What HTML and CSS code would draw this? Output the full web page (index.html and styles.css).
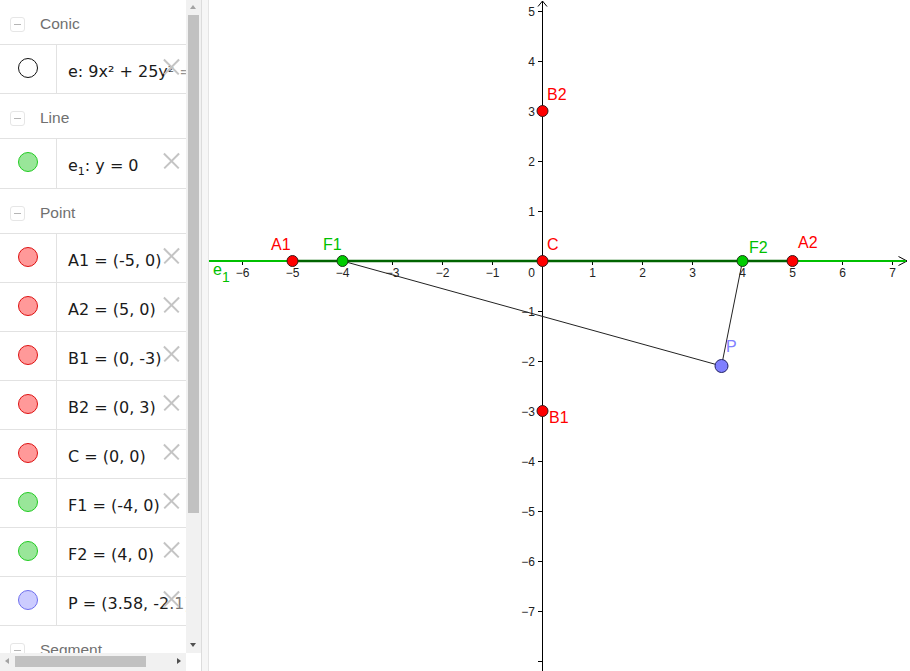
FILE: index.html
```html
<!DOCTYPE html>
<html>
<head>
<meta charset="utf-8">
<link rel="stylesheet" href="styles.css">
</head>
<body>
<div class="app">
  <div class="algebra">
    <div class="algebra-top">
      <div class="list">
        <div class="group"><span class="collapse"></span><span class="group-name">Conic</span></div>
        <div class="item"><div class="marble-col"><span class="marble m-conic"></span></div><div class="formula">e: 9x² + 25y² = 225</div><span class="del"></span></div>
        <div class="group"><span class="collapse"></span><span class="group-name">Line</span></div>
        <div class="item item-tall"><div class="marble-col"><span class="marble m-green"></span></div><div class="formula">e<sub>1</sub>: y = 0</div><span class="del"></span></div>
        <div class="group"><span class="collapse"></span><span class="group-name">Point</span></div>
        <div class="item"><div class="marble-col"><span class="marble m-red"></span></div><div class="formula">A1 = (-5, 0)</div><span class="del"></span></div>
        <div class="item"><div class="marble-col"><span class="marble m-red"></span></div><div class="formula">A2 = (5, 0)</div><span class="del"></span></div>
        <div class="item"><div class="marble-col"><span class="marble m-red"></span></div><div class="formula">B1 = (0, -3)</div><span class="del"></span></div>
        <div class="item"><div class="marble-col"><span class="marble m-red"></span></div><div class="formula">B2 = (0, 3)</div><span class="del"></span></div>
        <div class="item"><div class="marble-col"><span class="marble m-red"></span></div><div class="formula">C = (0, 0)</div><span class="del"></span></div>
        <div class="item"><div class="marble-col"><span class="marble m-green"></span></div><div class="formula">F1 = (-4, 0)</div><span class="del"></span></div>
        <div class="item"><div class="marble-col"><span class="marble m-green"></span></div><div class="formula">F2 = (4, 0)</div><span class="del"></span></div>
        <div class="item"><div class="marble-col"><span class="marble m-blue"></span></div><div class="formula">P = (3.58, -2.1)</div><span class="del"></span></div>
        <div class="group"><span class="collapse"></span><span class="group-name">Segment</span></div>
      </div>
      <div class="vscroll">
        <span class="arrow arrow-up"></span>
        <div class="vthumb"></div>
        <span class="arrow arrow-down"></span>
      </div>
    </div>
    <div class="algebra-bottom">
      <div class="hscroll">
        <span class="arrow arrow-left"></span>
        <div class="hthumb"></div>
        <span class="arrow arrow-right"></span>
      </div>
      <div class="corner"></div>
    </div>
  </div>
  <div class="splitter"></div>
  <div class="graphics">
    <svg class="canvas" width="701" height="671" viewBox="0 0 701 671">
      <g stroke="#000" stroke-width="1" fill="none">
        <line x1="0" y1="261" x2="698" y2="261"/>
        <polyline points="689.5,256.5 698,261 689.5,265.5"/>
        <line x1="333.5" y1="1" x2="333.5" y2="671"/>
        <polyline points="329,6.5 333.5,1 338,6.5"/>
      </g>
      <g stroke="#000" stroke-width="1">
        <line x1="33.5" y1="261" x2="33.5" y2="265"/>
        <line x1="83.5" y1="261" x2="83.5" y2="265"/>
        <line x1="133.5" y1="261" x2="133.5" y2="265"/>
        <line x1="183.5" y1="261" x2="183.5" y2="265"/>
        <line x1="233.5" y1="261" x2="233.5" y2="265"/>
        <line x1="283.5" y1="261" x2="283.5" y2="265"/>
        <line x1="383.5" y1="261" x2="383.5" y2="265"/>
        <line x1="433.5" y1="261" x2="433.5" y2="265"/>
        <line x1="483.5" y1="261" x2="483.5" y2="265"/>
        <line x1="533.5" y1="261" x2="533.5" y2="265"/>
        <line x1="583.5" y1="261" x2="583.5" y2="265"/>
        <line x1="633.5" y1="261" x2="633.5" y2="265"/>
        <line x1="683.5" y1="261" x2="683.5" y2="265"/>
        <line x1="329" y1="11.5" x2="333.5" y2="11.5"/>
        <line x1="329" y1="61.5" x2="333.5" y2="61.5"/>
        <line x1="329" y1="111.5" x2="333.5" y2="111.5"/>
        <line x1="329" y1="161.5" x2="333.5" y2="161.5"/>
        <line x1="329" y1="211.5" x2="333.5" y2="211.5"/>
        <line x1="329" y1="311.5" x2="333.5" y2="311.5"/>
        <line x1="329" y1="361.5" x2="333.5" y2="361.5"/>
        <line x1="329" y1="411.5" x2="333.5" y2="411.5"/>
        <line x1="329" y1="461.5" x2="333.5" y2="461.5"/>
        <line x1="329" y1="511.5" x2="333.5" y2="511.5"/>
        <line x1="329" y1="561.5" x2="333.5" y2="561.5"/>
        <line x1="329" y1="611.5" x2="333.5" y2="611.5"/>
        <line x1="329" y1="661.5" x2="333.5" y2="661.5"/>
      </g>
      <g class="axis-num" text-anchor="middle">
        <text x="33.5" y="277">−6</text>
        <text x="83.5" y="277">−5</text>
        <text x="133.5" y="277">−4</text>
        <text x="183.5" y="277">−3</text>
        <text x="233.5" y="277">−2</text>
        <text x="283.5" y="277">−1</text>
        <text x="383.5" y="277">1</text>
        <text x="433.5" y="277">2</text>
        <text x="483.5" y="277">3</text>
        <text x="533.5" y="277">4</text>
        <text x="583.5" y="277">5</text>
        <text x="633.5" y="277">6</text>
        <text x="683.5" y="277">7</text>
      </g>
      <g class="axis-num" text-anchor="end">
        <text x="326" y="277">0</text>
        <text x="326" y="16">5</text>
        <text x="326" y="66">4</text>
        <text x="326" y="116">3</text>
        <text x="326" y="166">2</text>
        <text x="326" y="216">1</text>
        <text x="326" y="316">−1</text>
        <text x="326" y="366">−2</text>
        <text x="326" y="416">−3</text>
        <text x="326" y="466">−4</text>
        <text x="326" y="516">−5</text>
        <text x="326" y="566">−6</text>
        <text x="326" y="616">−7</text>
      </g>
      <line x1="0" y1="261" x2="697" y2="261" stroke="#00c000" stroke-width="2"/>
      <line x1="83.5" y1="261" x2="583.5" y2="261" stroke="#006400" stroke-width="2.5"/>
      <g stroke="#222" stroke-width="1">
        <line x1="133.5" y1="261" x2="512.5" y2="366"/>
        <line x1="512.5" y1="366" x2="533.5" y2="261"/>
      </g>
      <g stroke="#3a1a1a" stroke-width="1">
        <circle cx="83.5" cy="261" r="5.5" fill="#ff0000"/>
        <circle cx="583.5" cy="261" r="5.5" fill="#ff0000"/>
        <circle cx="333.5" cy="411" r="5.5" fill="#ff0000"/>
        <circle cx="333.5" cy="111" r="5.5" fill="#ff0000"/>
        <circle cx="333.5" cy="261" r="5.5" fill="#ff0000"/>
      </g>
      <g stroke="#1a3a1a" stroke-width="1">
        <circle cx="133.5" cy="261" r="5.5" fill="#00cc00"/>
        <circle cx="533.5" cy="261" r="5.5" fill="#00cc00"/>
      </g>
      <circle cx="512.5" cy="366" r="6.5" fill="#7f7fff" stroke="#222266" stroke-width="1"/>
      <g class="pt-label">
        <text x="62" y="250" fill="#ff0000">A1</text>
        <text x="589" y="248" fill="#ff0000">A2</text>
        <text x="340" y="423" fill="#ff0000">B1</text>
        <text x="338" y="100" fill="#ff0000">B2</text>
        <text x="338" y="250" fill="#ff0000">C</text>
        <text x="114" y="250" fill="#00c000">F1</text>
        <text x="540" y="253" fill="#00c000">F2</text>
        <text x="517" y="352" fill="#8080ff">P</text>
        <text x="4" y="275" fill="#00c000">e<tspan dy="7" font-size="14">1</tspan></text>
      </g>
    </svg>
  </div>
</div>
</body>
</html>
```

FILE: styles.css
```css
html, body {
  margin: 0;
  padding: 0;
  background: #fff;
  overflow: hidden;
}

.app {
  display: flex;
  width: 910px;
  height: 671px;
  font-family: "DejaVu Sans", "Liberation Sans", sans-serif;
}

.algebra {
  width: 201px;
  display: flex;
  flex-direction: column;
  flex: none;
}

.algebra-top {
  display: flex;
  height: 653px;
}

.list {
  width: 186px;
  height: 653px;
  overflow: hidden;
  background: #fff;
}

.group {
  height: 44px;
  border-bottom: 1px solid #e2e2e2;
  display: flex;
  align-items: center;
}

.collapse {
  width: 13px;
  height: 13px;
  margin-left: 10px;
  margin-top: 5px;
  border: 1px solid #e6e6e6;
  border-radius: 3px;
  position: relative;
  flex: none;
}

.collapse::before {
  content: "";
  position: absolute;
  left: 3px;
  top: 6px;
  width: 7px;
  height: 1px;
  background: #b5b5b5;
}

.group-name {
  margin-left: 15px;
  margin-top: 4px;
  font-family: "Liberation Sans", sans-serif;
  font-size: 15.5px;
  color: #707070;
}

.item {
  height: 48px;
  border-bottom: 1px solid #e2e2e2;
  display: flex;
  position: relative;
}

.item-tall {
  height: 49px;
}

.marble-col {
  width: 56px;
  border-right: 1px solid #e2e2e2;
  flex: none;
  display: flex;
  justify-content: center;
  align-items: flex-start;
}

.marble {
  width: 18px;
  height: 18px;
  border-radius: 50%;
  margin-top: 13px;
  border: 1px solid #000;
  box-sizing: content-box;
}

.m-conic { background: #fff; border-color: #111; }
.m-green { background: #99e699; border-color: #22cc22; }
.m-red { background: #ff9999; border-color: #dd1111; }
.m-blue { background: #ccccff; border-color: #6f6fee; }

.formula {
  flex: 1;
  min-width: 0;
  padding: 17px 0 0 11px;
  font-size: 16px;
  line-height: 20px;
  color: #1a1a1a;
  white-space: nowrap;
  overflow: hidden;
  position: relative;
}

.formula sub {
  font-size: 11px;
  vertical-align: -4px;
  line-height: 0;
}

.formula::after {
  content: "";
  position: absolute;
  right: 0;
  top: 0;
  bottom: 0;
  width: 22px;
  background: linear-gradient(to right, rgba(255,255,255,0), rgba(255,255,255,0.6));
}

.del {
  position: absolute;
  left: 163px;
  top: 13px;
  width: 17px;
  height: 17px;
}

.del::before,
.del::after {
  content: "";
  position: absolute;
  left: -2px;
  top: 8px;
  width: 21px;
  height: 1.5px;
  background: #c4c4c4;
  transform: rotate(45deg);
}

.del::after {
  transform: rotate(-45deg);
}

.vscroll {
  width: 15px;
  height: 653px;
  background: #f1f1f1;
  position: relative;
  flex: none;
}

.vthumb {
  position: absolute;
  left: 2px;
  right: 2px;
  top: 15px;
  height: 498px;
  background: #c1c1c1;
}

.arrow {
  position: absolute;
  width: 0;
  height: 0;
}

.arrow-up {
  left: 4px;
  top: 5px;
  border-left: 3.5px solid transparent;
  border-right: 3.5px solid transparent;
  border-bottom: 4px solid #a3a3a3;
}

.arrow-down {
  left: 4px;
  top: 643px;
  border-left: 3.5px solid transparent;
  border-right: 3.5px solid transparent;
  border-top: 4px solid #505050;
}

.algebra-bottom {
  display: flex;
  height: 18px;
}

.hscroll {
  width: 186px;
  height: 18px;
  background: #f1f1f1;
  position: relative;
}

.hthumb {
  position: absolute;
  left: 15px;
  width: 131px;
  top: 3px;
  height: 11px;
  background: #c1c1c1;
}

.arrow-left {
  left: 5px;
  top: 5px;
  border-top: 3.5px solid transparent;
  border-bottom: 3.5px solid transparent;
  border-right: 4px solid #a3a3a3;
}

.arrow-right {
  left: 177px;
  top: 5px;
  border-top: 3.5px solid transparent;
  border-bottom: 3.5px solid transparent;
  border-left: 4px solid #505050;
}

.corner {
  width: 15px;
  background: #fff;
}

.splitter {
  width: 6px;
  flex: none;
  background: #f6f6f6;
  border-left: 1px solid #dcdcdc;
  border-right: 1px solid #e4e4e4;
}

.graphics {
  flex: 1;
  background: #fff;
  overflow: hidden;
}

.canvas {
  display: block;
}

.axis-num {
  font-family: "Liberation Sans", sans-serif;
  font-size: 12px;
  fill: #222;
}

.pt-label {
  font-family: "Liberation Sans", sans-serif;
  font-size: 16px;
}
```
